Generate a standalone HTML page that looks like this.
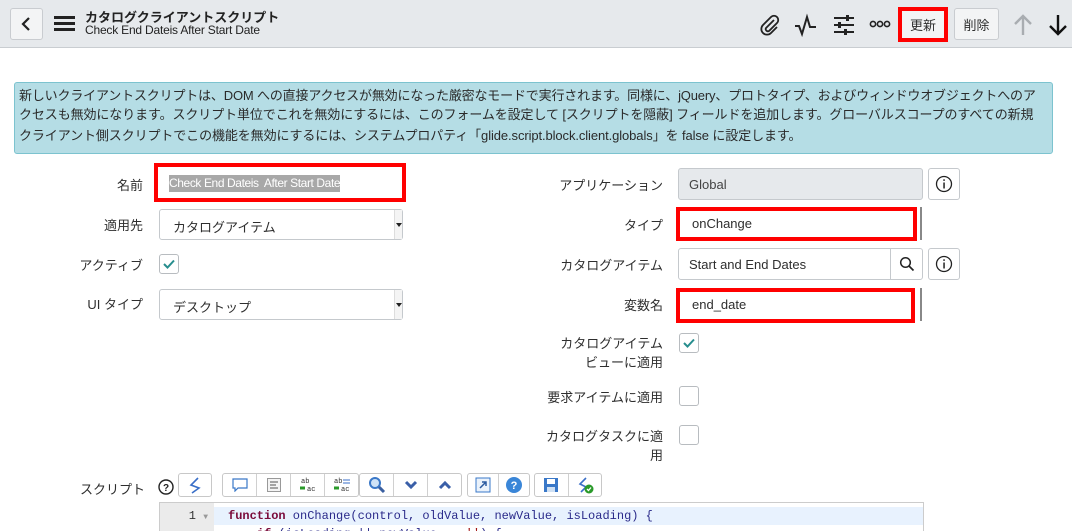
<!DOCTYPE html>
<html><head><meta charset="utf-8">
<style>
*{box-sizing:border-box;margin:0;padding:0}
body{width:1072px;height:531px;overflow:hidden;background:#fff;font-family:"Liberation Sans","Noto Sans CJK JP",sans-serif;color:#2e2e2e;position:relative;font-size:13px}
.a{position:absolute}
.hdr{left:0;top:0;width:1072px;height:48px;background:#e6e9ec;border-bottom:1px solid #c9cdd1}
.btn{background:#f3f4f5;border:1px solid #c9ccd0;border-radius:3px}
.lbl{text-align:right;white-space:nowrap;font-size:13px;color:#2e2e2e}
.inp{background:#fff;border:1px solid #c5c9cd;border-radius:3px;font-size:13px;padding-left:13px;display:flex;align-items:center}
.red{border:4px solid #f00}
.cb{width:20px;height:20px;border:1px solid #b8bcc0;border-radius:3px;background:#fff}
.tb{top:473px;height:24px;border:1px solid #c8c8c8;border-radius:3px;background:#fff;display:flex}
.tb div{flex:1;border-right:1px solid #d0d0d0;display:flex;align-items:center;justify-content:center}
.tb div:last-child{border-right:none}
.selarrow{position:absolute;right:0;top:0;width:8px;height:100%;border-left:1px solid #ddd;background:#f4f4f4}
.selarrow:after{content:"";position:absolute;left:1px;top:45%;border:3px solid transparent;border-top:4px solid #222}
</style></head><body>
<div class="a hdr"></div>
<div class="a btn" style="left:10px;top:8px;width:33px;height:32px"></div>
<svg class="a" style="left:18px;top:15px" width="16" height="18"><path d="M11 3 L5 9 L11 15" stroke="#222" stroke-width="2.2" fill="none"/></svg>
<svg class="a" style="left:54px;top:16px" width="21" height="16"><rect x="0" y="0" width="21" height="3" fill="#222"/><rect x="0" y="6" width="21" height="3" fill="#222"/><rect x="0" y="12" width="21" height="3" fill="#222"/></svg>
<div class="a" style="left:85px;top:7px;font-size:13px;font-weight:bold;color:#222;white-space:nowrap">カタログクライアントスクリプト</div>
<div class="a" style="left:85px;top:23px;font-size:12px;color:#222;white-space:nowrap;letter-spacing:-0.2px">Check End Dateis After Start Date</div>
<svg class="a" style="left:757px;top:13px" width="24" height="24"><path d="M17 7 L9 15 a2.2 2.2 0 0 0 3 3 L20 10 a4 4 0 0 0 -6 -6 L6 12 a5.5 5.5 0 0 0 8 8 L20 14" stroke="#222" stroke-width="1.8" fill="none"/></svg>
<svg class="a" style="left:794px;top:13px" width="24" height="24"><path d="M1 13 L5 13 L8 21 L13 4 L16 14 L22 14" stroke="#222" stroke-width="2" fill="none"/></svg>
<svg class="a" style="left:833px;top:13px" width="22" height="24"><path d="M1 5H21M1 12H21M1 19H21" stroke="#222" stroke-width="2"/><rect x="13" y="2" width="3" height="6" fill="#222"/><rect x="5" y="9" width="3" height="6" fill="#222"/><rect x="11" y="16" width="3" height="6" fill="#222"/></svg>
<svg class="a" style="left:869px;top:19px" width="22" height="10"><circle cx="4" cy="5" r="2.6" stroke="#222" stroke-width="1.6" fill="none"/><circle cx="11" cy="5" r="2.6" stroke="#222" stroke-width="1.6" fill="none"/><circle cx="18" cy="5" r="2.6" stroke="#222" stroke-width="1.6" fill="none"/></svg>
<div class="a" style="left:898px;top:7px;width:50px;height:35px;border:4px solid #f00;background:#f3f4f5;font-size:13px;display:flex;align-items:center;justify-content:center">更新</div>
<div class="a btn" style="left:954px;top:8px;width:45px;height:32px;font-size:13px;display:flex;align-items:center;justify-content:center">削除</div>
<svg class="a" style="left:1012px;top:13px" width="22" height="24"><path d="M11 3V22M3 11L11 3L19 11" stroke="#a9adb1" stroke-width="2.4" fill="none"/></svg>
<svg class="a" style="left:1047px;top:13px" width="22" height="24"><path d="M11 2V21M3 13L11 21L19 13" stroke="#111" stroke-width="2.4" fill="none"/></svg>

<div class="a" style="left:14px;top:82px;width:1039px;height:72px;background:#b5dde5;border:1px solid #7cc3cf;border-radius:3px;font-size:13px;color:#2a2a2a;padding:3px 0 0 4px;white-space:nowrap;line-height:20px;overflow:hidden">
<div style="letter-spacing:-0.17px">新しいクライアントスクリプトは、DOM への直接アクセスが無効になった厳密なモードで実行されます。同様に、jQuery、プロトタイプ、およびウィンドウオブジェクトへのア</div>
<div style="margin-top:-1px;letter-spacing:-0.1px">クセスも無効になります。スクリプト単位でこれを無効にするには、このフォームを設定して [スクリプトを隠蔽] フィールドを追加します。グローバルスコープのすべての新規</div>
<div style="margin-top:1px;letter-spacing:-0.1px">クライアント側スクリプトでこの機能を無効にするには、システムプロパティ「glide.script.block.client.globals」を false に設定します。</div>
</div>

<!-- left column -->
<div class="a lbl" style="right:929px;top:175px">名前</div>
<div class="a red" style="left:154px;top:163px;width:252px;height:39px;background:#fff"></div>
<div class="a" style="left:169px;top:175px;background:#a8a8a8;color:#fff;font-size:12px;line-height:17px;white-space:nowrap;letter-spacing:-0.4px">Check End Dateis&nbsp; After Start Date</div>
<div class="a lbl" style="right:929px;top:215px">適用先</div>
<div class="a inp" style="left:159px;top:209px;width:244px;height:31px;padding-top:4px">カタログアイテム<div class="selarrow"></div></div>
<div class="a lbl" style="right:929px;top:255px">アクティブ</div>
<div class="a cb" style="left:159px;top:254px"></div>
<svg class="a" style="left:162px;top:257px" width="14" height="14"><path d="M2 7L5.5 10.5L12 3.5" stroke="#278e8e" stroke-width="2" fill="none"/></svg>
<div class="a lbl" style="right:929px;top:294px">UI タイプ</div>
<div class="a inp" style="left:159px;top:289px;width:244px;height:31px;padding-top:4px">デスクトップ<div class="selarrow"></div></div>

<!-- right column -->
<div class="a lbl" style="right:409px;top:175px">アプリケーション</div>
<div class="a inp" style="left:678px;top:168px;width:245px;height:32px;background:#e6e9ec;color:#444;padding-left:10px">Global</div>
<div class="a inp" style="left:928px;top:168px;width:32px;height:32px;padding:0;justify-content:center"><svg width="18" height="18"><circle cx="9" cy="9" r="7.5" stroke="#222" stroke-width="1.3" fill="none"/><rect x="8.3" y="7.5" width="1.5" height="6" fill="#222"/><rect x="8.3" y="4.3" width="1.5" height="1.6" fill="#222"/></svg></div>
<div class="a lbl" style="right:409px;top:215px">タイプ</div>
<div class="a" style="left:676px;top:207px;width:246px;height:33px;background:#fff;border-right:2px solid #888"></div>
<div class="a red" style="left:676px;top:207px;width:241px;height:34px;font-size:13px;padding:5px 0 0 12px">onChange</div>
<div class="a lbl" style="right:409px;top:255px">カタログアイテム</div>
<div class="a inp" style="left:678px;top:248px;width:245px;height:32px;padding-left:10px">Start and End Dates</div>
<div class="a" style="left:890px;top:248px;width:33px;height:32px;border-left:1px solid #c5c9cd;display:flex;align-items:center;justify-content:center"><svg width="16" height="16"><circle cx="6.5" cy="6.5" r="4.8" stroke="#222" stroke-width="1.5" fill="none"/><path d="M10 10L14.5 14.5" stroke="#222" stroke-width="1.7"/></svg></div>
<div class="a inp" style="left:928px;top:248px;width:32px;height:32px;padding:0;justify-content:center"><svg width="18" height="18"><circle cx="9" cy="9" r="7.5" stroke="#222" stroke-width="1.3" fill="none"/><rect x="8.3" y="7.5" width="1.5" height="6" fill="#222"/><rect x="8.3" y="4.3" width="1.5" height="1.6" fill="#222"/></svg></div>
<div class="a lbl" style="right:409px;top:295px">変数名</div>
<div class="a" style="left:676px;top:288px;width:246px;height:33px;background:#fff;border-right:2px solid #888"></div>
<div class="a red" style="left:676px;top:288px;width:239px;height:35px;font-size:13px;padding:5px 0 0 12px">end_date</div>

<div class="a lbl" style="right:409px;top:334px;line-height:19px">カタログアイテム<br>ビューに適用</div>
<div class="a cb" style="left:679px;top:333px"></div>
<svg class="a" style="left:682px;top:336px" width="14" height="14"><path d="M2 7L5.5 10.5L12 3.5" stroke="#278e8e" stroke-width="2" fill="none"/></svg>
<div class="a lbl" style="right:409px;top:387px">要求アイテムに適用</div>
<div class="a cb" style="left:679px;top:386px"></div>
<div class="a lbl" style="right:409px;top:427px;line-height:19px">カタログタスクに適<br>用</div>
<div class="a cb" style="left:679px;top:425px"></div>

<!-- script -->
<div class="a lbl" style="left:80px;top:479px">スクリプト</div>
<svg class="a" style="left:158px;top:479px" width="16" height="16"><circle cx="8" cy="8" r="7" stroke="#222" stroke-width="1.4" fill="none"/><text x="8" y="12" font-size="10" text-anchor="middle" font-family="Liberation Sans" font-weight="bold" fill="#222">?</text></svg>
<div class="a tb" style="left:178px;width:34px"><div><svg width="16" height="18"><path d="M11 2L4 9L12 12L5 17" stroke="#3a6fc8" stroke-width="1.6" fill="none"/></svg></div></div>
<div class="a tb" style="left:222px;width:137px">
<div><svg width="16" height="14"><path d="M1 1H15V10H6L3 13V10H1Z" stroke="#3a78c8" stroke-width="1.2" fill="#fff"/></svg></div>
<div><svg width="14" height="14"><rect x="0.5" y="0.5" width="13" height="13" fill="#f4f4f4" stroke="#999"/><path d="M3 4H11M3 7H9M3 10H11" stroke="#555"/></svg></div>
<div><svg width="18" height="16"><text x="2" y="6" font-size="7" font-family="Liberation Mono" fill="#333">ab</text><text x="8" y="14" font-size="7" font-family="Liberation Mono" fill="#333">ac</text><path d="M1 11H6" stroke="#2a9a2a" stroke-width="3"/></svg></div>
<div><svg width="18" height="16"><text x="1" y="6" font-size="7" font-family="Liberation Mono" fill="#333">ab</text><path d="M10 3H17M10 6H17" stroke="#3a6fc8"/><text x="8" y="14" font-size="7" font-family="Liberation Mono" fill="#333">ac</text><path d="M1 11H6" stroke="#2a9a2a" stroke-width="3"/></svg></div>
</div>
<div class="a tb" style="left:359px;width:103px">
<div><svg width="18" height="18"><circle cx="7" cy="7" r="5" stroke="#3a78c8" stroke-width="2" fill="#cfe3f7"/><path d="M11 11L16 16" stroke="#3a5fa0" stroke-width="3"/></svg></div>
<div><svg width="14" height="10"><path d="M2 2L7 7L12 2" stroke="#3a5fa8" stroke-width="3" fill="none"/></svg></div>
<div><svg width="14" height="10"><path d="M2 8L7 3L12 8" stroke="#3a5fa8" stroke-width="3" fill="none"/></svg></div>
</div>
<div class="a tb" style="left:467px;width:63px">
<div><svg width="16" height="16"><rect x="1" y="1" width="14" height="14" fill="#eaf2fb" stroke="#3a78c8"/><path d="M5 11L11 5M7 5H11V9" stroke="#2a5aa0" stroke-width="1.5" fill="none"/></svg></div>
<div><svg width="18" height="18"><circle cx="9" cy="9" r="8" fill="#3a86d8"/><text x="9" y="13" font-size="11" text-anchor="middle" font-family="Liberation Sans" font-weight="bold" fill="#fff">?</text></svg></div>
</div>
<div class="a tb" style="left:534px;width:68px">
<div><svg width="16" height="16"><rect x="1" y="1" width="14" height="14" fill="#3a78c8"/><rect x="4" y="2" width="8" height="5" fill="#fff"/><rect x="4" y="10" width="8" height="5" fill="#cfe0f3"/></svg></div>
<div><svg width="18" height="18"><path d="M10 2L4 8L10 11L5 16" stroke="#3a6fc8" stroke-width="1.6" fill="none"/><circle cx="13" cy="13" r="4.5" fill="#2a9a2a"/><path d="M11 13L12.5 14.5L15 11.5" stroke="#fff" stroke-width="1.3" fill="none"/></svg></div>
</div>

<div class="a" style="left:159px;top:502px;width:765px;height:29px;border:1px solid #ccc;border-bottom:none;background:#fff;overflow:hidden">
<div class="a" style="left:0;top:0;width:54px;height:29px;background:#ebebeb"></div>
<div class="a" style="left:54px;top:4px;width:711px;height:18px;background:#e8f2fe"></div>
<div class="a" style="left:0;top:4px;width:54px;font-family:'Liberation Mono',monospace;font-size:12px;line-height:18px;color:#333;text-align:right;padding-right:6px">1 <span style="font-size:8px;color:#999">▼</span><br>2 <span style="font-size:8px;color:#999">▼</span></div>
<div class="a" style="left:68px;top:4px;font-family:'Liberation Mono',monospace;font-size:12px;line-height:18px;white-space:pre;color:#2a2a8a"><span style="color:#7a0a3a;font-weight:bold">function</span> onChange(control, oldValue, newValue, isLoading) {
    <span style="color:#7a0a3a;font-weight:bold">if</span> (isLoading || newValue == <span style="color:#a31515">''</span>) {</div>
</div>
</body></html>
